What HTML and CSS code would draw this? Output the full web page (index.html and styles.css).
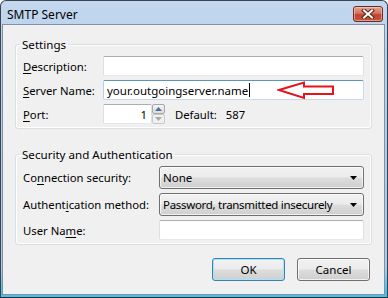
FILE: index.html
```html
<!DOCTYPE html>
<html lang="en">
<head>
    <meta charset="UTF-8">
    <title>SMTP Server</title>
    <link rel="stylesheet" href="styles.css">
</head>
<body>
    <div class="window">
        <div class="titlebar">
            <span class="title">SMTP Server</span>
            <div class="close-btn">
                <svg width="14" height="10" viewBox="0 0 14 10">
                    <path d="M3 1.5 L11 8.5 M11 1.5 L3 8.5" stroke="#5a2418" stroke-width="4" stroke-linecap="square"/>
                    <path d="M3 1.5 L11 8.5 M11 1.5 L3 8.5" stroke="#fff" stroke-width="2" stroke-linecap="square"/>
                </svg>
            </div>
        </div>

        <div class="client">
            <fieldset class="group settings">
                <legend>Settings</legend>
                <div class="row">
                    <label><u>D</u>escription:</label>
                    <div class="textbox"></div>
                </div>
                <div class="row">
                    <label><u>S</u>erver Name:</label>
                    <div class="textbox focused">
                        <span class="value">your.outgoingserver.name</span><span class="caret"></span>
                        <svg class="red-arrow" width="60" height="20" viewBox="0 0 60 20">
                            <polygon points="2,9 27,1.5 27,5.5 56,5.5 56,13 27,13 27,17" fill="none" stroke="#e8141c" stroke-width="2" stroke-linejoin="miter"/>
                        </svg>
                    </div>
                </div>
                <div class="row">
                    <label><u>P</u>ort:</label>
                    <div class="port">
                        <div class="textbox port-box">1</div>
                        <div class="spinner">
                            <div class="spin up">
                                <svg width="7" height="4" viewBox="0 0 7 4"><polygon points="3.5,0 7,4 0,4" fill="#4d6f9c"/></svg>
                            </div>
                            <div class="spin down">
                                <svg width="7" height="4" viewBox="0 0 7 4"><polygon points="0,0 7,0 3.5,4" fill="#a9a9a9"/></svg>
                            </div>
                        </div>
                    </div>
                    <span class="default-label">Default:</span>
                    <span class="default-value">587</span>
                </div>
            </fieldset>

            <fieldset class="group security">
                <legend>Security and Authentication</legend>
                <div class="row">
                    <label>Co<u>n</u>nection security:</label>
                    <div class="combo">
                        <span>None</span>
                        <svg width="7" height="4" viewBox="0 0 7 4"><polygon points="0,0 7,0 3.5,4" fill="#000"/></svg>
                    </div>
                </div>
                <div class="row">
                    <label>Authent<u>i</u>cation method:</label>
                    <div class="combo">
                        <span class="combo-text">Password, transmitted insecurely</span>
                        <svg width="7" height="4" viewBox="0 0 7 4"><polygon points="0,0 7,0 3.5,4" fill="#000"/></svg>
                    </div>
                </div>
                <div class="row">
                    <label>User Na<u>m</u>e:</label>
                    <div class="textbox"></div>
                </div>
            </fieldset>

            <div class="buttons">
                <button class="btn default">OK</button>
                <button class="btn">Cancel</button>
            </div>
        </div>
    </div>
</body>
</html>
```

FILE: styles.css
```css
/* Window frame */
body {
    margin: 0;
    font-family: 'Noto Sans', 'Open Sans', sans-serif;
    font-size: 11.3px;
    color: #000;
    background: #fff;
}

.window {
    width: 388px;
    height: 298px;
    box-sizing: border-box;
    border: 1px solid #3a4451;
    border-bottom-color: #1d2a33;
    border-radius: 6px 6px 0 0;
    background: linear-gradient(#c3d8ef, #b8cfe8 20%, #aecbe8 90%, #45c3e6 98%);
    padding: 0 2px 2px 1px;
    display: flex;
    flex-direction: column;
    overflow: hidden;
}

.titlebar {
    height: 23px;
    flex-shrink: 0;
    display: flex;
    align-items: center;
    justify-content: space-between;
    padding: 0 1px 0 5px;
}

.title {
    font-size: 12px;
    margin-top: 4px;
    color: #000;
}

.close-btn {
    width: 30px;
    height: 16px;
    margin-top: 3px;
    margin-right: 1px;
    box-sizing: border-box;
    border: 1px solid #6b2a22;
    border-radius: 3px;
    background: linear-gradient(#e4a493, #d0735e 45%, #c2422f 55%, #c9553f);
    box-shadow: inset 0 0 0 1px rgba(255, 220, 210, 0.5);
    display: flex;
    align-items: center;
    justify-content: center;
}

/* Client area */
.client {
    flex: 1;
    background: #f0f0f0;
    border: 1px solid #7b92aa;
    padding: 11px 12px 0 12px;
    display: flex;
    flex-direction: column;
}

.group {
    margin: 0;
    padding: 3px 7px 4px 7px;
    border: 1px solid #d5dfe5;
    border-radius: 3px;
    box-shadow: inset 0 0 0 1px #fff;
    display: flex;
    flex-direction: column;
    gap: 4px;
}

.group legend {
    padding: 0 2px;
    margin-left: -3px;
    line-height: 17px;
    font-size: 11.6px;
}

.security {
    margin-top: 17px;
}

.row {
    display: flex;
    align-items: center;
}

.settings label {
    width: 80px;
    flex-shrink: 0;
}

.security label {
    width: 136px;
    flex-shrink: 0;
}

u {
    text-decoration-thickness: 1px;
    text-underline-offset: 2px;
}

/* Text boxes */
.textbox {
    position: relative;
    flex: 1;
    height: 20px;
    box-sizing: border-box;
    background: #fff;
    border: 1px solid #dbdfe6;
    border-top-color: #abadb3;
    border-bottom-color: #e3e9ef;
    border-radius: 2px;
    padding: 0 3px;
    display: flex;
    align-items: center;
}

.textbox.focused {
    border-color: #c5daed;
    border-top-color: #5893c4;
    border-left-color: #b5cfe7;
    font-size: 11.5px;
}

.caret {
    display: inline-block;
    width: 1px;
    height: 14px;
    background: #000;
    margin-left: 1px;
}

.red-arrow {
    position: absolute;
    left: 173px;
    top: 0;
}

.port {
    display: flex;
    width: 62px;
}

.port-box {
    width: 49px;
    flex: none;
    justify-content: flex-end;
    padding-right: 4px;
}

.spinner {
    width: 13px;
    display: flex;
    flex-direction: column;
}

.spin {
    height: 10px;
    box-sizing: border-box;
    border: 1px solid #a7a7a7;
    border-radius: 2px;
    background: linear-gradient(#f4f4f4, #dcdcdc);
    display: flex;
    align-items: center;
    justify-content: center;
}

.spin.down {
    border-color: #c9c9c9;
    background: #f0f0f0;
}

.default-label {
    margin-left: 10px;
}

.default-value {
    margin-left: 9px;
}

/* Combo boxes */
.combo {
    flex: 1;
    height: 23px;
    box-sizing: border-box;
    border: 1px solid #707070;
    border-radius: 3px;
    background: linear-gradient(#f2f2f2, #ebebeb 49%, #dddddd 51%, #cfcfcf);
    box-shadow: inset 0 0 0 1px rgba(255, 255, 255, 0.7);
    display: flex;
    align-items: center;
    justify-content: space-between;
    padding: 0 6px 0 3px;
    font-size: 11.5px;
}

.combo-text {
    letter-spacing: -0.3px;
}

/* Dialog buttons */
.buttons {
    margin-top: 13px;
    display: flex;
    justify-content: flex-end;
    gap: 12px;
    padding-right: 2px;
}

.btn {
    width: 73px;
    height: 23px;
    font-family: inherit;
    font-size: 11.5px;
    color: #000;
    border: 1px solid #707070;
    border-radius: 3px;
    background: linear-gradient(#f2f2f2, #ebebeb 49%, #dddddd 51%, #cfcfcf);
    box-shadow: inset 0 0 0 1px rgba(255, 255, 255, 0.7);
    padding: 0;
}

.btn.default {
    border-color: #3c7fb1;
    box-shadow: inset 0 0 0 1px #a8e4f7;
}
```
